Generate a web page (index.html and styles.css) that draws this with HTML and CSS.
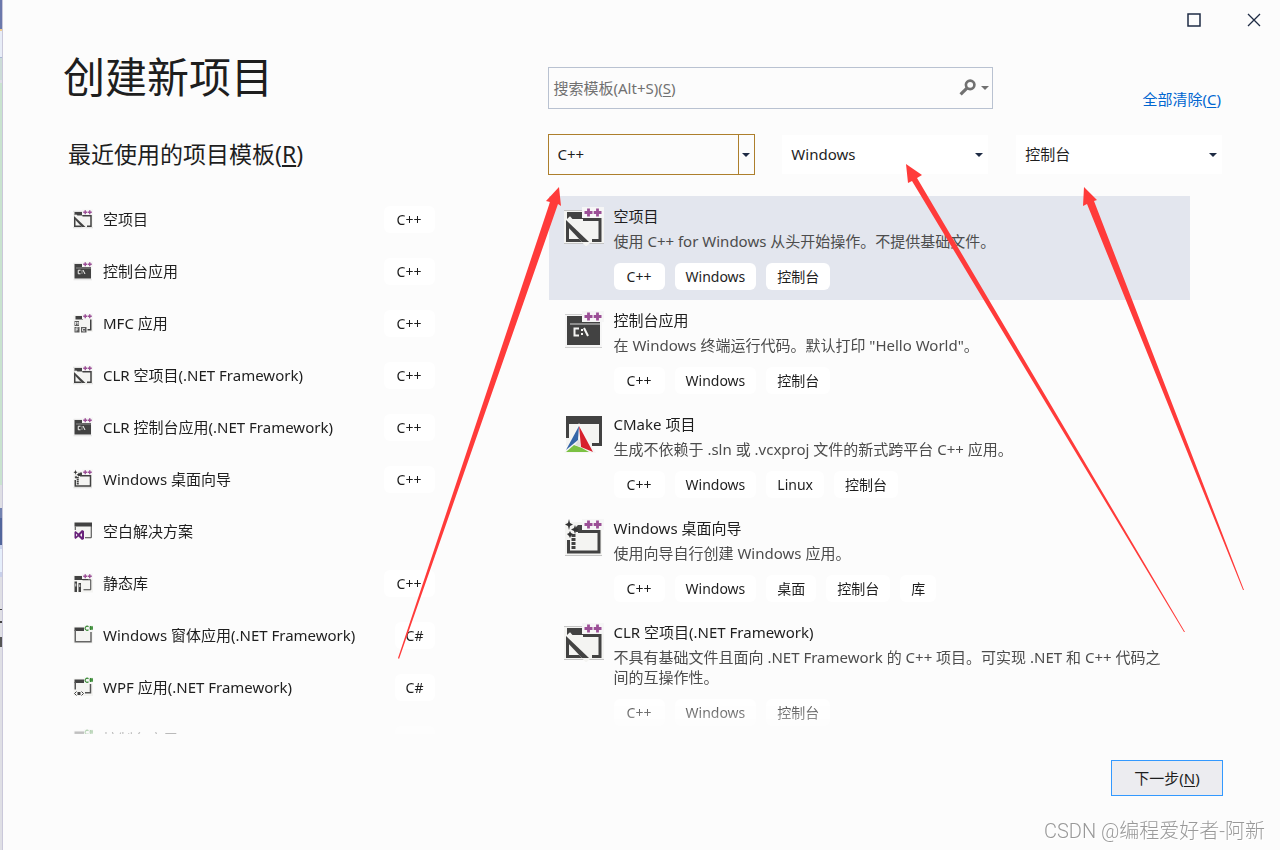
FILE: index.html
```html
<!DOCTYPE html>
<html lang="zh-CN">
<head>
<meta charset="utf-8">
<title>创建新项目</title>
<link rel="stylesheet" href="styles.css">
</head>
<body>
<svg class="sprite" aria-hidden="true">
  <symbol id="plus" viewBox="0 0 40 40">
    <path d="M18 1H40V12H18Z" fill="#f6f6f6"/>
    <path d="M24.500 2.500V10.500M20.500 6.500H28.500M33.500 2.500V10.500M29.700 6.500H37.500" stroke="#9b4f96" stroke-width="2.800" fill="none"/>
  </symbol>
  <symbol id="sharp" viewBox="0 0 40 40">
    <path d="M22 0H40V13H22Z" fill="#f6f6f6"/>
    <path d="M31 3.500A4 4 0 1 0 31 9.500M35 2V10M38 2V10M33 4.500H40M33 7.500H40" stroke="#388a34" stroke-width="2.200" fill="none"/>
  </symbol>
  <symbol id="empty" viewBox="0 0 40 40">
    <path d="M0 4H40V38H0Z" fill="#f4f4f2"/>
    <path d="M0 4.500H18M0 37.500H40" stroke="#c4c4c4" fill="none"/>
    <path d="M3 6H18V10H21L23 12H30V13H3Z" fill="#424242"/>
    <path d="M3.500 17V34.500H22M19 13.500H36V34.500H28" stroke="#424242" stroke-width="3" fill="none"/>
    <path d="M3 13L25 38" stroke="#f4f4f2" stroke-width="8"/>
    <path d="M2 14V19L18 36H25Z" fill="#424242"/>
    <use href="#plus"/>
  </symbol>
  <symbol id="console" viewBox="0 0 40 40">
    <path d="M1 4H38V38H1Z" fill="#f6f6f6"/>
    <path d="M1 4.500H18M1 37.500H38" stroke="#d0d0d0"/>
    <path d="M3 6H18V11L21 12H36V35H3Z" fill="#424242"/>
    <path d="M6 14H36" stroke="#d8d8d8" stroke-width="1"/>
    <path d="M15 18.500H10.500V25.500H15M18 19V21M18 23V25M20 18L24 26" stroke="#f4f4f2" stroke-width="2" fill="none"/>
    <use href="#plus"/>
  </symbol>
  <symbol id="mfc" viewBox="0 0 40 40">
    <path d="M1 4H40V38H1Z" fill="#f4f4f2"/>
    <path d="M5 6H20V13H5Z" fill="#424242"/>
    <path d="M35.500 13V33.500H29" stroke="#424242" stroke-width="3" fill="none"/>
    <path d="M3 16H12V26H3ZM3 28H13V39H3ZM16 28H27V39H16Z" fill="#5a5a5a"/>
    <path d="M5 24V18L8 21L10 18V24M10.500 30H6V37M6 33.500H10M24 31H19V36H24" stroke="#fff" stroke-width="1.500" fill="none"/>
    <use href="#plus"/>
  </symbol>
  <symbol id="wizard" viewBox="0 0 40 40">
    <path d="M1 4H38V38H1Z" fill="#f4f4f2"/>
    <path d="M1 37.500H38" stroke="#c4c4c4"/>
    <path d="M12 9L14 7H18L20 10H30V14H12Z" fill="#424242"/>
    <path d="M14 13.500H35V34H4.500V22" stroke="#424242" stroke-width="3" fill="none"/>
    <path d="M9.500 16V31" stroke="#424242" stroke-width="4" stroke-dasharray="3 1"/>
    <path d="M5 1L6 5L9 6.500L6 8L5 12L4 8L1 6.500L4 5ZM11 7L12 10L15 11.500L12 13L11 16L10 13L7 11.500L10 10ZM6 13L7 15L9 16L7 18L6 20L5 18L3 16L5 15Z" fill="#333"/>
    <use href="#plus"/>
  </symbol>
  <symbol id="solution" viewBox="0 0 40 40">
    <path d="M3 3H38V34H3Z" fill="#f4f4f2"/>
    <path d="M3 3H38V11H3Z" fill="#424242"/>
    <path d="M4.500 11V18M36.500 10V33.500H24" stroke="#424242" stroke-width="2" fill="none"/>
    <path d="M3 22L5 20L11 25L18 18L22 20V36L18 38L11 31L5 36L3 34ZM6 25V31L9 28ZM18 24L14 28L18 32Z" fill="#68217a" fill-rule="evenodd"/>
  </symbol>
  <symbol id="library" viewBox="0 0 40 40">
    <path d="M1 4H40V39H1Z" fill="#f4f4f2"/>
    <path d="M3 6H18V10L22 12H30V14H3Z" fill="#424242"/>
    <path d="M19 13.500H35.500V33.500H21" stroke="#424242" stroke-width="2" fill="none"/>
    <path d="M3 17H8V38H3ZM11 20H16V38H11Z" fill="#424242"/>
    <path d="M5.500 21V27M13.500 23V28" stroke="#ddd" stroke-width="2"/>
    <use href="#plus"/>
  </symbol>
  <symbol id="winform" viewBox="0 0 40 40">
    <path d="M1 3H40V37H1Z" fill="#f4f4f2"/>
    <path d="M3 5H22V12H3Z" fill="#424242"/>
    <path d="M4.500 10V33.500H36V14" stroke="#666" stroke-width="3" fill="none"/>
    <use href="#sharp"/>
  </symbol>
  <symbol id="wpf" viewBox="0 0 40 40">
    <path d="M1 3H40V38H1Z" fill="#f4f4f2"/>
    <path d="M3 5H22V12H3Z" fill="#424242"/>
    <path d="M4.500 10V25M35 14V31.500H24" stroke="#555" stroke-width="3" fill="none"/>
    <path d="M7 29L3 33L7 37M17 29L21 33L17 37" stroke="#424242" stroke-width="2" fill="none"/>
    <path d="M9 30H15V36H9Z" fill="#424242"/>
    <use href="#sharp"/>
  </symbol>
  <symbol id="cmake" viewBox="0 0 40 40">
    <path d="M2 2H38V32H2Z" fill="#f4f4f2"/>
    <path d="M2 2H38V10H2Z" fill="#424242"/>
    <path d="M3.500 9V24M36.500 9V30.500H28" stroke="#424242" stroke-width="3" fill="none"/>
    <path d="M15 9L0 39H32Z" fill="#f6f6f6"/>
    <path d="M15 12L2 36L14 26Z" fill="#3465a8"/>
    <path d="M15 12L29 38L17 33Z" fill="#d7202c"/>
    <path d="M2 38L10 31L18 34L25 38Z" fill="#7bc143"/>
    <path d="M15 25L11 31L17 33Z" fill="#dedede"/>
  </symbol>
  <symbol id="caret" viewBox="0 0 8 4"><path d="M0 0H8L4 4Z" fill="currentColor"/></symbol>
</svg>

<div class="desktop">
  <div class="backdrop"></div>
  <div class="dialog">
    <header class="titlebar">
      <button class="winbtn" type="button" aria-label="最大化"><svg viewBox="0 0 14 14"><path d="M1 1H13V13H1Z" fill="none" stroke="#1e2b44" stroke-width="1.500"/></svg></button>
      <button class="winbtn" type="button" aria-label="关闭"><svg viewBox="0 0 14 14"><path d="M1 1L13 13M13 1L1 13" fill="none" stroke="#1e2b44" stroke-width="1.300"/></svg></button>
    </header>

    <main class="content">
      <section class="recent">
        <h1>创建新项目</h1>
        <h2>最近使用的项目模板(<u>R</u>)</h2>
        <ul class="recent-list">
          <li><svg class="icon-s"><use href="#empty"/></svg><span>空项目</span><b class="chip cpp">C++</b></li>
          <li><svg class="icon-s"><use href="#console"/></svg><span>控制台应用</span><b class="chip cpp">C++</b></li>
          <li><svg class="icon-s"><use href="#mfc"/></svg><span>MFC 应用</span><b class="chip cpp">C++</b></li>
          <li><svg class="icon-s"><use href="#empty"/></svg><span>CLR 空项目(.NET Framework)</span><b class="chip cpp">C++</b></li>
          <li><svg class="icon-s"><use href="#console"/></svg><span>CLR 控制台应用(.NET Framework)</span><b class="chip cpp">C++</b></li>
          <li><svg class="icon-s"><use href="#wizard"/></svg><span>Windows 桌面向导</span><b class="chip cpp">C++</b></li>
          <li><svg class="icon-s"><use href="#solution"/></svg><span>空白解决方案</span></li>
          <li><svg class="icon-s"><use href="#library"/></svg><span>静态库</span><b class="chip cpp">C++</b></li>
          <li><svg class="icon-s"><use href="#winform"/></svg><span>Windows 窗体应用(.NET Framework)</span><b class="chip">C#</b></li>
          <li><svg class="icon-s"><use href="#wpf"/></svg><span>WPF 应用(.NET Framework)</span><b class="chip">C#</b></li>
          <li><svg class="icon-s"><use href="#winform"/></svg><span>控制台应用(.NET Framework)</span><b class="chip">C#</b></li>
        </ul>
      </section>

      <section class="browse">
        <div class="search-row">
          <div class="search">
            <input id="search" type="text">
            <label for="search">搜索模板(Alt+S)(<u>S</u>)</label>
            <svg class="lens" viewBox="0 0 16 16"><circle cx="10.500" cy="5.500" r="4" fill="none" stroke="#717171" stroke-width="2.500"/><path d="M7.500 8.500L1.500 14.500" stroke="#717171" stroke-width="3"/></svg>
            <svg class="caret"><use href="#caret"/></svg>
          </div>
          <a class="clear" href="#">全部清除(<u>C</u>)</a>
        </div>
        <div class="filters">
          <div class="combo active"><select aria-label="语言"><option>C++</option></select><svg class="caret"><use href="#caret"/></svg></div>
          <div class="combo"><select aria-label="平台"><option>Windows</option></select><svg class="caret"><use href="#caret"/></svg></div>
          <div class="combo"><select aria-label="项目类型"><option>控制台</option></select><svg class="caret"><use href="#caret"/></svg></div>
        </div>
        <ul class="templates">
          <li class="selected"><svg class="icon-l"><use href="#empty"/></svg><div>
            <h3>空项目</h3><p>使用 C++ for Windows 从头开始操作。不提供基础文件。</p>
            <div class="chips"><b class="chip cpp">C++</b><b class="chip">Windows</b><b class="chip">控制台</b></div></div></li>
          <li><svg class="icon-l"><use href="#console"/></svg><div>
            <h3>控制台应用</h3><p>在 Windows 终端运行代码。默认打印 "Hello World"。</p>
            <div class="chips"><b class="chip cpp">C++</b><b class="chip">Windows</b><b class="chip">控制台</b></div></div></li>
          <li><svg class="icon-l"><use href="#cmake"/></svg><div>
            <h3>CMake 项目</h3><p>生成不依赖于 .sln 或 .vcxproj 文件的新式跨平台 C++ 应用。</p>
            <div class="chips"><b class="chip cpp">C++</b><b class="chip">Windows</b><b class="chip">Linux</b><b class="chip">控制台</b></div></div></li>
          <li><svg class="icon-l"><use href="#wizard"/></svg><div>
            <h3>Windows 桌面向导</h3><p>使用向导自行创建 Windows 应用。</p>
            <div class="chips"><b class="chip cpp">C++</b><b class="chip">Windows</b><b class="chip">桌面</b><b class="chip">控制台</b><b class="chip">库</b></div></div></li>
          <li><svg class="icon-l"><use href="#empty"/></svg><div>
            <h3>CLR 空项目(.NET Framework)</h3><p>不具有基础文件且面向 .NET Framework 的 C++ 项目。可实现 .NET 和 C++ 代码之间的互操作性。</p>
            <div class="chips"><b class="chip cpp">C++</b><b class="chip">Windows</b><b class="chip">控制台</b></div></div></li>
        </ul>
      </section>
    </main>

    <footer class="actions"><button class="next" type="button">下一步(<u>N</u>)</button></footer>
  </div>

  <svg class="arrows" width="1280" height="850" viewBox="0 0 1280 850" fill="#ff3b3a" aria-hidden="true">
    <path d="M559 187L561 206L558 204L399 659L398 658L550 202L546 201Z"/>
    <path d="M906 164L922 175L917 178L1185 632L1184 632L912 181L908 183Z"/>
    <path d="M1084 187L1097 200L1094 201L1244 590L1243 590L1087 204L1083 206Z"/>
  </svg>
  <div class="watermark">CSDN @编程爱好者-阿新</div>
</div>
</body>
</html>
```
FILE: styles.css
```css
* { box-sizing: border-box; }
body {
  margin: 0;
  background: #fcfcfc;
  color: #1e1e1e;
  font: 15px/20px "Noto Sans", "Noto Sans CJK SC", sans-serif;
}
h1, h2, h3, p, ul { margin: 0; padding: 0; font-weight: 400; }
ul { list-style: none; }
u { text-underline-offset: 2px; }
.sprite { position: absolute; width: 0; height: 0; }

.desktop { position: relative; display: flex; height: 100vh; overflow: hidden; }
.backdrop {
  flex: none;
  width: 3px;
  border-right: 1px solid #cac8da;
  background: linear-gradient(#6b78ab 0 29px, #f0cd8e 29px 31px, #e8edf7 31px 57px, #a9b8d6 57px 58px, #ccdcd8 58px 80px, #dddde6 80px 83px, #c9e3cf 83px 485px, #dfdfe5 485px 508px, #7282b0 508px 518px, #52669c 518px 545px, #c9d3ee 545px 549px, #e5eefb 549px 572px, #c8d0ea 572px 577px, #dfdfe5 577px 609px, #444 609px 610px, #dfdfe5 610px 621px, #444 621px 623px, #dfdfe5 623px 637px, #555 637px 647px, #dfdfe5 647px);
}
.dialog { flex: 1; min-width: 0; display: flex; flex-direction: column; }

.titlebar { display: flex; justify-content: flex-end; height: 40px; margin-right: -4px; }
.winbtn { width: 60px; padding: 0; border: 0; background: none; }
.winbtn svg { display: block; width: 14px; height: 14px; margin: 0 auto; }

.content {
  flex: 1;
  min-height: 0;
  display: grid;
  grid-template-columns: minmax(0, 11fr) minmax(0, 20fr);
  grid-template-rows: minmax(0, 1fr);
  column-gap: 113px;
  padding: 0 57px 0 60px;
}
.recent, .browse { display: flex; flex-direction: column; min-height: 0; }

h1 { font-size: 42px; line-height: 60px; margin-top: 7px; }
h2 { font-size: 23px; line-height: 32px; margin: 31px 0 23px; padding-left: 5px; }
h3 { font-size: 15px; line-height: 20px; }

.recent-list, .templates { flex: 1; min-height: 0; overflow: hidden; }
.recent-list { mask-image: linear-gradient(#000 calc(100% - 30px), transparent calc(100% + 12px)); }
.recent-list li { display: flex; align-items: center; height: 52px; padding-left: 10px; white-space: nowrap; }
.recent-list span { margin-left: 10px; }
.recent-list .chip { margin-left: auto; }
.icon-s { width: 20px; height: 20px; flex: none; }
.icon-l { width: 40px; height: 40px; flex: none; }

.chip {
  display: inline-block;
  padding: 0 11px;
  border-radius: 6px;
  background: #fff;
  font-size: 14px;
  font-weight: 400;
  line-height: 27px;
  text-align: center;
}
.cpp { min-width: 51px; }
.chips { display: flex; gap: 10px; margin-top: 12px; }

.search-row { display: flex; justify-content: space-between; margin-top: 27px; }
.search { position: relative; width: 66%; height: 42px; }
.search input { width: 100%; height: 100%; padding: 0 48px 0 6px; border: 1px solid #b9c2d1; background: #fcfcfc; font: inherit; }
.search label { position: absolute; left: 6px; top: 11px; color: #717171; pointer-events: none; }
.search .lens { position: absolute; right: 17px; top: 12px; width: 17px; height: 17px; }
.caret { position: absolute; right: 5px; top: 18px; width: 8px; height: 4px; color: #1e2b44; pointer-events: none; }
.search .caret { right: 4px; top: 19px; color: #717171; }
.clear { align-self: flex-end; margin-right: 2px; color: #0066d0; text-decoration: none; }

.filters { display: grid; grid-template-columns: repeat(3, minmax(0, 1fr)); gap: 26px; margin-top: 25px; }
.combo { position: relative; height: 41px; background: #fff; border: 1px solid #fcfcfc; }
.combo select { width: 100%; height: 100%; padding: 0 28px 2px 9px; border: 0; background: none; color: inherit; font: inherit; appearance: none; }
.combo.active { border-color: #ad7f2c; background: #fcfcfc; }
.combo.active::after { content: ""; position: absolute; top: 0; right: 15px; bottom: 0; width: 1px; background: #ad7f2c; }
.combo.active .caret { right: 4px; }

.templates { margin: 21px 33px 0 1px; mask-image: linear-gradient(#000 calc(100% - 40px), transparent calc(100% + 10px)); }
.templates li { display: flex; gap: 10px; padding: 10px 20px 10px 15px; }
.templates li > div { min-width: 0; }
.templates .selected { background: #e3e6ee; }
.templates p { margin-top: 5px; color: #4c4c4c; }

.actions { display: flex; justify-content: flex-end; padding: 26px 57px 54px 0; }
.next { width: 112px; height: 36px; padding: 0; border: 1px solid #3399ff; background: #ececf0; color: inherit; font: inherit; }

.arrows { position: absolute; left: 0; top: 0; pointer-events: none; }
.watermark { position: absolute; right: 15px; bottom: 4px; color: #999; font: 20px/30px Roboto, "Noto Sans CJK SC", sans-serif; font-weight: 300; text-shadow: 1px 1px 0 #fff; }
```
